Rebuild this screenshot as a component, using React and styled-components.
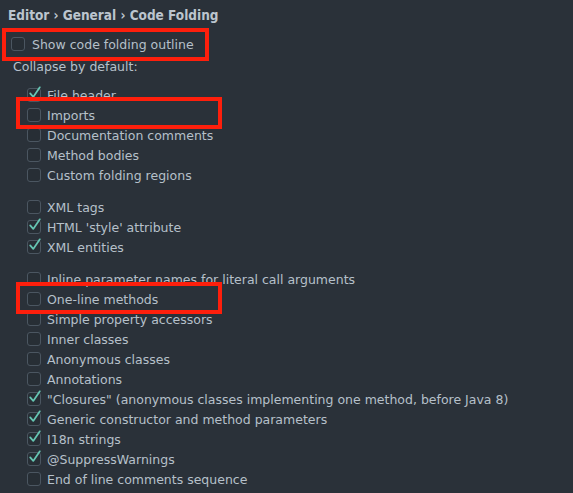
import React from 'react';
import styled, { createGlobalStyle } from 'styled-components';

const GlobalStyle = createGlobalStyle`
  html, body {
    margin: 0;
    padding: 0;
    background: #2a3139;
  }
  body {
    font-family: "DejaVu Sans", "Liberation Sans", sans-serif;
    font-size: 12.5px;
    color: #b6c0ca;
  }
`;

const groups = [
  [
    { label: 'File header', checked: true },
    { label: 'Imports' },
    { label: 'Documentation comments' },
    { label: 'Method bodies' },
    { label: 'Custom folding regions' },
  ],
  [
    { label: 'XML tags' },
    { label: "HTML 'style' attribute", checked: true },
    { label: 'XML entities', checked: true },
  ],
  [
    { label: 'Inline parameter names for literal call arguments' },
    { label: 'One-line methods' },
    { label: 'Simple property accessors' },
    { label: 'Inner classes' },
    { label: 'Anonymous classes' },
    { label: 'Annotations' },
    { label: '"Closures" (anonymous classes implementing one method, before Java 8)', checked: true },
    { label: 'Generic constructor and method parameters', checked: true },
    { label: 'I18n strings', checked: true },
    { label: '@SuppressWarnings', checked: true },
    { label: 'End of line comments sequence' },
  ],
];

const Checkbox = ({ checked }) => (
  <Box>
    {checked && (
      <Tick viewBox="0 0 16 16">
        <path d="M2.5 8.5 L6 12.5 L13.5 1.5" />
      </Tick>
    )}
  </Box>
);

const App = () => {
  return (
    <Page>
      <GlobalStyle />
      <Breadcrumb>Editor › General › Code Folding</Breadcrumb>
      <TopRow>
        <Checkbox />
        <span>Show code folding outline</span>
      </TopRow>
      <SectionLabel>Collapse by default:</SectionLabel>
      <Groups>
        {groups.map((group, i) => (
          <Group key={i}>
            {group.map((item) => (
              <Row key={item.label}>
                <Checkbox checked={item.checked} />
                <span>{item.label}</span>
              </Row>
            ))}
          </Group>
        ))}
      </Groups>
      <Highlight style={{ left: 2, top: 28, width: 207, height: 33 }} />
      <Highlight style={{ left: 16, top: 97, width: 206, height: 32 }} />
      <Highlight style={{ left: 16, top: 282, width: 206, height: 32 }} />
    </Page>
  );
};

const Page = styled.div`
  position: relative;
  height: 493px;
  padding: 5px 8px 0;
  box-sizing: border-box;
  overflow: hidden;
`;

const Breadcrumb = styled.div`
  font-family: "DejaVu Sans Condensed", "DejaVu Sans", sans-serif;
  font-size: 13.5px;
  font-weight: bold;
  line-height: 20px;
  color: #bcc5ce;
`;

const TopRow = styled.div`
  display: flex;
  align-items: center;
  gap: 7px;
  height: 20px;
  margin-top: 9px;
  padding-left: 3px;
`;

const SectionLabel = styled.div`
  line-height: 20px;
  margin-top: 3px;
  padding-left: 5px;
`;

const Groups = styled.div`
  display: flex;
  flex-direction: column;
  gap: 12px;
  margin-top: 8px;
  padding-left: 19px;
`;

const Group = styled.div`
  display: flex;
  flex-direction: column;
`;

const Row = styled.div`
  display: flex;
  align-items: center;
  gap: 6px;
  height: 20px;
  white-space: nowrap;
`;

const Box = styled.span`
  position: relative;
  flex: none;
  width: 12px;
  height: 12px;
  border: 1px solid #4b5661;
  border-radius: 3px;
  background: #272e35;
`;

const Tick = styled.svg`
  position: absolute;
  left: 0;
  top: -3px;
  width: 14px;
  height: 14px;
  overflow: visible;

  path {
    fill: none;
    stroke: #66c6b3;
    stroke-width: 2;
    stroke-linecap: round;
    stroke-linejoin: round;
  }
`;

const Highlight = styled.div`
  position: absolute;
  box-sizing: border-box;
  border: 4px solid #fe1f0c;
  pointer-events: none;
`;

export default App;
